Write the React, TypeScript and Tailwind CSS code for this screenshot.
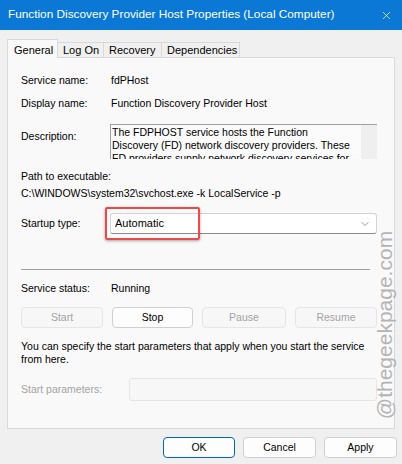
import { X, ChevronDown } from 'lucide-react';

const font = { fontFamily: '"Liberation Sans", Arial, sans-serif' };

const TABS = [
  { label: 'General', w: 'w-[51px]' },
  { label: 'Log On', w: 'w-[46px]' },
  { label: 'Recovery', w: 'w-[58px]' },
  { label: 'Dependencies', w: 'w-[78px]' },
];

const DESC = [
  'The FDPHOST service hosts the Function',
  'Discovery (FD) network discovery providers. These',
  'FD providers supply network discovery services for',
];

function Btn({ label, disabled, primary, className = '' }: { label: string; disabled?: boolean; primary?: boolean; className?: string }) {
  const tone = disabled
    ? 'border-[#e5e5e5] bg-[#f7f7f7] text-[#a3a3a3]'
    : primary
      ? 'border-[#0067c0] bg-[#fdfdfd] text-black'
      : 'border-[#d0d0d0] bg-[#fdfdfd] text-black';
  return (
    <div className={`flex h-[21px] items-center justify-center rounded-[4px] border ${tone} ${className}`}>
      {label}
    </div>
  );
}

export default function App() {
  return (
    <div className="relative h-[464px] w-[402px] overflow-hidden bg-[#f0f0f0] text-[10.5px] text-black" style={font}>
      {/* title bar */}
      <div className="flex h-[30px] items-center justify-between bg-[#0a78d4] pl-[8px] pr-[9px] text-[11.8px] text-white">
        <span>Function Discovery Provider Host Properties (Local Computer)</span>
        <X size={13} strokeWidth={1.3} />
      </div>

      {/* tabs */}
      <div className="flex items-end pl-[7px] pt-[9px]">
        {TABS.map((t, i) =>
          i === 0 ? (
            <div key={t.label} className={`relative z-10 -mb-px flex h-[19px] items-start border border-b-0 border-[#d9d9d9] bg-[#f9f9f9] pl-[6px] pt-[2px] text-[11px] ${t.w}`}>
              {t.label}
            </div>
          ) : (
            <div key={t.label} className={`flex h-[15px] items-center border border-b-0 border-l-0 border-[#d9d9d9] pl-[5px] text-[11px] ${t.w}`}>
              {t.label}
            </div>
          ),
        )}
      </div>

      {/* panel */}
      <div className="mx-[7px] w-[388px] border border-[#d9d9d9] bg-[#f9f9f9] pb-[27px] pl-[13px] pr-[17px]">
        <div className="mt-[15px] flex h-[16px] items-center">
          <span className="w-[90px]">Service name:</span>
          <span>fdPHost</span>
        </div>
        <div className="mt-[7px] flex h-[16px] items-center">
          <span className="w-[90px]">Display name:</span>
          <span>Function Discovery Provider Host</span>
        </div>
        <div className="mt-[12px] flex items-start">
          <span className="mt-[5px] w-[89px]">Description:</span>
          <div className="flex h-[35px] w-[267px] overflow-hidden border-l border-t border-[#a0a0a0] bg-[#fbfbfb]">
            <div className="flex-1 whitespace-nowrap pl-[1px] pt-[1px] leading-[13px]">
              {DESC.map((l) => (
                <div key={l}>{l}</div>
              ))}
            </div>
            <div className="w-[16px] shrink-0 bg-[#efefef]" />
          </div>
        </div>
        <div className="mt-[10px] flex h-[16px] items-center">Path to executable:</div>
        <div className="mt-[1px] flex h-[16px] items-center">C:\WINDOWS\system32\svchost.exe -k LocalService -p</div>
        <div className="mt-[11px] flex h-[21px] items-center">
          <span className="w-[89px]">Startup type:</span>
          <div className="relative flex h-[21px] w-[267px] items-center justify-between rounded-[3px] border border-b-[#8a8a8a] border-[#d3d3d3] bg-white pl-[4px] pr-[5px] text-[11px]">
            <span>Automatic</span>
            <ChevronDown size={12} strokeWidth={1.2} className="text-[#555]" />
            <div className="absolute left-[-6px] top-[-7px] h-[33px] w-[95px] rounded-[2px] border-[2px] border-[#ea4a4a] shadow-[0_1px_3px_rgba(0,0,0,0.35)]" />
          </div>
        </div>
        <div className="mt-[35px] h-px w-[349px] bg-[#a0a0a0]" />
        <div className="mt-[11px] flex h-[16px] items-center">
          <span className="w-[90px]">Service status:</span>
          <span>Running</span>
        </div>
        <div className="mt-[10px] flex w-[356px] justify-between">
          <Btn label="Start" disabled className="w-[82px]" />
          <Btn label="Stop" className="w-[81px]" />
          <Btn label="Pause" disabled className="w-[84px]" />
          <Btn label="Resume" disabled className="w-[82px]" />
        </div>
        <p className="mt-[12px] leading-[13px]">
          You can specify the start parameters that apply when you start the service from here.
        </p>
        <div className="mt-[12px] flex h-[23px] items-center">
          <span className="w-[108px] text-[#a3a3a3]">Start parameters:</span>
          <div className="h-[23px] w-[248px] rounded-[3px] border border-[#e5e5e5] bg-[#f7f7f7]" />
        </div>
      </div>

      {/* dialog buttons */}
      <div className="mt-[8px] flex justify-end gap-[8px] pr-[5px]">
        <Btn label="OK" primary className="w-[72px]" />
        <Btn label="Cancel" className="w-[73px]" />
        <Btn label="Apply" className="w-[73px]" />
      </div>

      {/* watermark */}
      <div className="absolute left-[385px] top-[325px] -translate-x-1/2 -translate-y-1/2 -rotate-90 whitespace-nowrap text-[21px] text-[#b4b4b4]">
        @thegeekpage.com
      </div>
    </div>
  );
}
